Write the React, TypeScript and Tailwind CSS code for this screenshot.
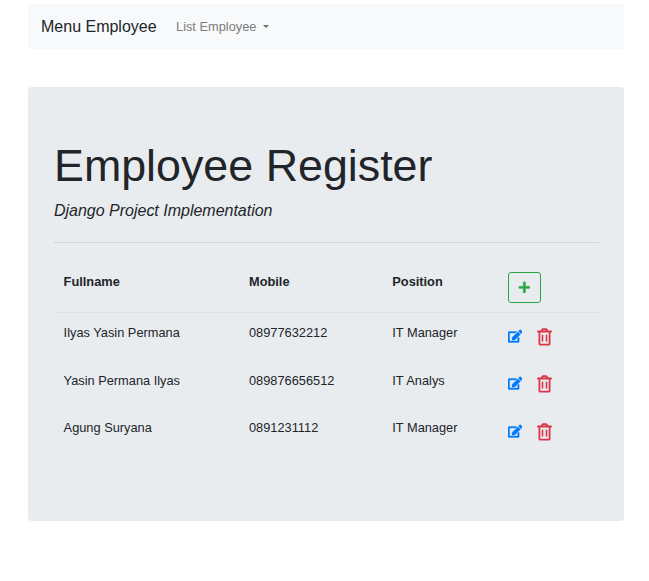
import React from "react";
import { FaEdit, FaPlus } from "react-icons/fa";

const employees = [
  { name: "Ilyas Yasin Permana", mobile: "08977632212", position: "IT Manager" },
  { name: "Yasin Permana Ilyas", mobile: "089876656512", position: "IT Analys" },
  { name: "Agung Suryana", mobile: "0891231112", position: "IT Manager" },
];

const columns = "grid grid-cols-[185.4px_143.3px_115.3px_1fr] px-[9.6px]";

function TrashIcon() {
  return (
    <svg
      viewBox="0 0 15 18"
      className="ml-[14.6px] h-[18px] w-[15px] text-[#dc3545]"
      fill="none"
      stroke="currentColor"
      strokeWidth="1.8"
      strokeLinecap="round"
      strokeLinejoin="round"
    >
      <path d="M.9 3.5h13.2M4.3 3.2l1.3-2h3.8l1.3 2M2.4 3.7v12q0 1 1 1h8.2q1 0 1-1v-12" />
      <path d="M5.5 7.2v5.8M9.5 7.2v5.8" strokeWidth="1.6" />
    </svg>
  );
}

export default function App() {
  return (
    <div className="h-[581px] bg-white pl-7 pr-[25px] pt-1 font-['Liberation_Sans',Arial,sans-serif] text-[#212529]">
      <nav className="flex h-[45px] items-center bg-[#f8f9fa] pl-[13px]">
        <span className="text-[16px] leading-6">Menu Employee</span>
        <button className="ml-[19.4px] flex items-center text-[12.8px] text-[#7c7d7d]">
          List Employee
          <span className="ml-[6.4px] border-x-[3px] border-t-[3px] border-x-transparent border-t-[#6c6d6d]" />
        </button>
      </nav>
      <main className="mt-[38px] h-[434px] rounded-[4px] bg-[#e9ecef] pl-[26px] pr-[25px] pt-[51px]">
        <h1 className="text-[44.8px] leading-[54px]">Employee Register</h1>
        <p className="mt-[7px] text-[16px] italic leading-6 tracking-[-0.01px]">Django Project Implementation</p>
        <hr className="mt-[19px] border-[#d2d4d7]" />
        <div className={`${columns} mt-5 h-[50px] border-b border-[#dee2e6] pt-[9px] text-[12.8px] font-bold leading-5`}>
          <span>Fullname</span>
          <span>Mobile</span>
          <span>Position</span>
          <button className="flex h-[31px] w-[33px] items-center justify-center rounded-[3px] border border-[#28a745] text-[#28a745]">
            <FaPlus size={12.8} stroke="currentColor" strokeWidth={12} className="mb-px" />
          </button>
        </div>
        {employees.map((e) => (
          <div key={e.name} className={`${columns} h-[47.5px] pt-[10px] text-[12.8px] leading-5`}>
            <span>{e.name}</span>
            <span>{e.mobile}</span>
            <span>{e.position}</span>
            <span className="flex items-center self-start pt-[4.9px]">
              <FaEdit size={14.4} stroke="currentColor" strokeWidth={14} className="mb-[1.6px] text-[#007bff]" />
              <TrashIcon />
            </span>
          </div>
        ))}
      </main>
    </div>
  );
}
